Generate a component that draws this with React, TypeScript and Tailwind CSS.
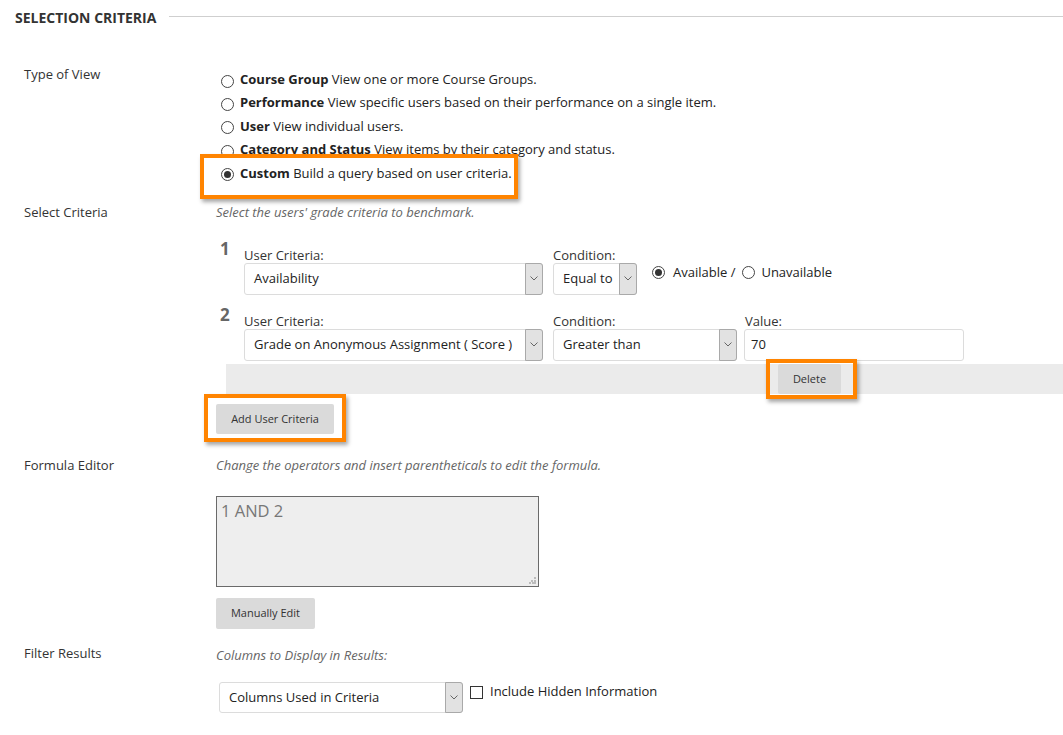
function Chevron() {
  return (
    <svg width="8" height="5" viewBox="0 0 8 5" fill="none">
      <polyline points="0.5,0.5 4,4 7.5,0.5" stroke="#666" strokeWidth="1" />
    </svg>
  );
}

function Select({ value, className }: { value: string; className: string }) {
  return (
    <div className={`flex rounded-[3px] border border-[#dcdcdc] bg-white ${className}`}>
      <div className="flex flex-1 items-center pl-[9px] text-[13px] text-[#222] whitespace-nowrap">{value}</div>
      <div className="-my-px -mr-px flex w-[18px] items-center justify-center rounded-r-[3px] border border-[#a9a9a9] bg-[#e2e2e2]">
        <Chevron />
      </div>
    </div>
  );
}

function Radio({ checked = false }: { checked?: boolean }) {
  return (
    <span className="flex h-[13px] w-[13px] shrink-0 items-center justify-center rounded-full border border-[#444] bg-white">
      {checked && <span className="h-[7px] w-[7px] rounded-full bg-[#333]" />}
    </span>
  );
}

function GrayButton({ children, className }: { children: React.ReactNode; className: string }) {
  return (
    <button className={`flex items-center justify-center rounded-[2px] bg-[#dadada] text-[11px] text-[#333] ${className}`}>
      {children}
    </button>
  );
}

const views = [
  { name: "Course Group", text: "View one or more Course Groups." },
  { name: "Performance", text: "View specific users based on their performance on a single item." },
  { name: "User", text: "View individual users." },
  { name: "Category and Status", text: "View items by their category and status." },
  { name: "Custom", text: "Build a query based on user criteria.", checked: true },
];

export default function App() {
  return (
    <div className="relative h-[735px] w-[1063px] overflow-hidden bg-white font-['Open_Sans',sans-serif] text-[13px] text-[#333]">
      {/* Header */}
      <div className="flex h-[34px] items-center gap-[13px] pl-[15px]">
        <h2 className="text-[14px] font-bold text-[#333]">SELECTION CRITERIA</h2>
        <div className="mt-[-2px] h-px flex-1 bg-[#cfcfcf]" />
      </div>

      {/* Type of View */}
      <div className="mt-[28px] flex">
        <div className="w-[216px] pl-[24px] leading-[24px]">Type of View</div>
        <div className="pt-[6px]">
          {views.map((v) => (
            <div key={v.name} className="flex h-[23.4px] items-center gap-[6px] pl-[5px] text-[#222]">
              <span className="mt-[3px]">
                <Radio checked={v.checked} />
              </span>
              <span>
                <b className="font-bold">{v.name}</b> {v.text}
              </span>
            </div>
          ))}
        </div>
      </div>

      {/* Select Criteria */}
      <div className="mt-[15px] flex">
        <div className="w-[216px] shrink-0 pl-[24px] leading-[24px]">Select Criteria</div>
        <div className="flex-1">
          <p className="italic leading-[24px] text-[#666]">Select the users' grade criteria to benchmark.</p>

          {/* Criteria 1 */}
          <div className="mt-[15px] flex">
            <div className="w-[28px] pl-[4px] text-[17px] font-bold leading-[20px] text-[#666]">1</div>
            <div className="flex pt-[8px]">
              <div className="w-[299px]">
                <div className="leading-[16px]">User Criteria:</div>
                <Select value="Availability" className="h-[32px] w-[299px]" />
              </div>
              <div className="ml-[10px] w-[84px]">
                <div className="leading-[16px]">Condition:</div>
                <Select value="Equal to" className="h-[32px] w-[84px]" />
              </div>
              <div className="ml-[15px] flex items-center self-start pt-[16px] leading-[18px] text-[#222]">
                <span className="mt-[2px]">
                  <Radio checked />
                </span>
                <span className="ml-[8px]">Available /</span>
                <span className="ml-[7px] mt-[2px]">
                  <Radio />
                </span>
                <span className="ml-[6px]">Unavailable</span>
              </div>
            </div>
          </div>

          {/* Criteria 2 */}
          <div className="mt-[10px] flex">
            <div className="w-[28px] pl-[4px] text-[17px] font-bold leading-[20px] text-[#666]">2</div>
            <div className="flex pt-[8px]">
              <div className="w-[299px]">
                <div className="leading-[16px]">User Criteria:</div>
                <Select value="Grade on Anonymous Assignment ( Score )" className="h-[32px] w-[299px]" />
              </div>
              <div className="ml-[10px] w-[184px]">
                <div className="leading-[16px]">Condition:</div>
                <Select value="Greater than" className="h-[32px] w-[184px]" />
              </div>
              <div className="ml-[7px] w-[220px]">
                <div className="pl-px leading-[16px]">Value:</div>
                <div className="flex h-[32px] w-[220px] items-center rounded-[3px] border border-[#dcdcdc] bg-white pl-[6px] text-[#222]">
                  70
                </div>
              </div>
            </div>
          </div>

          <div className="ml-[10px] mt-[3px] flex h-[30px] bg-[#ebebeb] pl-[552px]">
            <GrayButton className="h-[30px] w-[63px]">Delete</GrayButton>
          </div>

          <GrayButton className="mt-[10px] h-[30px] w-[118px]">Add User Criteria</GrayButton>
        </div>
      </div>

      {/* Formula Editor */}
      <div className="mt-[19px] flex">
        <div className="w-[216px] shrink-0 pl-[24px] leading-[24px]">Formula Editor</div>
        <div className="flex-1">
          <p className="italic leading-[24px] text-[#666]">Change the operators and insert parentheticals to edit the formula.</p>
          <div className="relative mt-[19px] h-[91px] w-[323px] border border-[#6a6a6a] bg-[#eeeeee] px-[4px] pt-[3px] text-[16.5px] leading-[22px] text-[#777]">
            1 AND 2
            <svg className="absolute bottom-[2px] right-[2px]" width="7" height="7" viewBox="0 0 7 7">
              <rect x="5" y="0" width="2" height="2" fill="#bbb" />
              <rect x="2" y="3" width="2" height="2" fill="#bbb" />
              <rect x="5" y="3" width="2" height="2" fill="#bbb" />
              <rect x="0" y="5" width="2" height="2" fill="#bbb" />
              <rect x="3" y="5" width="2" height="2" fill="#bbb" />
              <rect x="5" y="5" width="2" height="2" fill="#bbb" />
            </svg>
          </div>
          <GrayButton className="mt-[11px] h-[31px] w-[99px]">Manually Edit</GrayButton>
        </div>
      </div>

      {/* Filter Results */}
      <div className="mt-[12px] flex">
        <div className="w-[216px] shrink-0 pl-[24px] leading-[24px]">Filter Results</div>
        <div className="flex-1">
          <p className="mt-[2px] italic leading-[24px] text-[#666]">Columns to Display in Results:</p>
          <div className="ml-[3px] mt-[15px] flex items-start">
            <Select value="Columns Used in Criteria" className="h-[31px] w-[244px]" />
            <span className="ml-[7px] mt-[4px] h-[13px] w-[13px] border border-[#333] bg-white" />
            <span className="ml-[7px] leading-[18px] text-[#222]">Include Hidden Information</span>
          </div>
        </div>
      </div>

      {/* Highlight boxes */}
      <div className="absolute left-[200px] top-[154px] h-[45px] w-[318px] border-[4px] border-[#ff8400] shadow-[2px_3px_4px_rgba(0,0,0,0.35)]" />
      <div className="absolute left-[766px] top-[359px] h-[40px] w-[91px] border-[4px] border-[#ff8400] shadow-[2px_3px_4px_rgba(0,0,0,0.35)]" />
      <div className="absolute left-[204px] top-[394px] h-[48px] w-[142px] border-[4px] border-[#ff8400] shadow-[2px_3px_4px_rgba(0,0,0,0.35)]" />
    </div>
  );
}
